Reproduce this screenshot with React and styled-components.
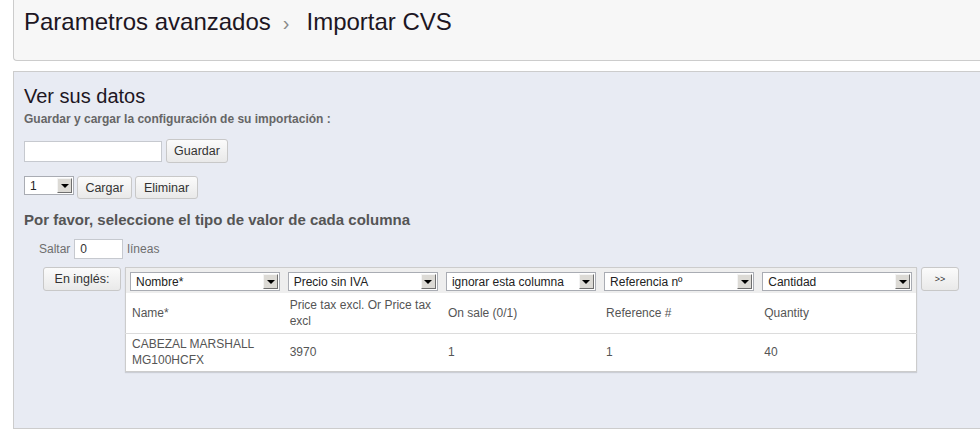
import React from "react";
import styled, { createGlobalStyle } from "styled-components";

const Global = createGlobalStyle`
  html, body { margin: 0; padding: 0; background: #fff; }
  body { font-family: "Liberation Sans", Arial, sans-serif; overflow: hidden; }
  * { box-sizing: border-box; }
`;

const Page = styled.div`
  width: 980px;
  height: 444px;
  padding-left: 13px;
  overflow: hidden;
`;

const Header = styled.header`
  height: 61px;
  margin-right: -20px;
  background: #f7f7f7;
  border: 1px solid #cccccc;
  border-top: none;
  border-right: none;
  border-bottom-left-radius: 4px;
  padding: 8px 0 0 10px;
`;

const Crumbs = styled.h1`
  margin: 0;
  font-size: 24px;
  line-height: 28px;
  font-weight: normal;
  color: #1d1623;
  display: flex;
  align-items: baseline;
`;

const Sep = styled.span`
  color: #8a8a8a;
  font-size: 20px;
  margin: 0 17px 0 12px;
`;

const Panel = styled.section`
  margin-top: 10px;
  margin-right: -20px;
  background: #e8ebf3;
  border: 1px solid #cccccc;
  border-right: none;
  padding: 12px 0 56px 10px;
`;

const Title = styled.h2`
  margin: 0;
  font-size: 20px;
  line-height: 24px;
  font-weight: normal;
  color: #1d1623;
`;

const Sub = styled.p`
  margin: 4px 0 0;
  font-size: 12px;
  line-height: 15px;
  font-weight: bold;
  color: #666666;
`;

const Row = styled.div`
  display: flex;
  align-items: ${(p) => p.$align || "center"};
  gap: ${(p) => p.$gap ?? 4}px;
  margin-top: ${(p) => p.$mt || 0}px;
  padding-left: ${(p) => p.$indent || 0}px;
`;

const TextInput = styled.div`
  width: ${(p) => p.$w}px;
  height: ${(p) => p.$h || 21}px;
  background: #fff;
  border: 1px solid #c6c9cf;
  font-size: 12px;
  color: #333;
  padding-left: 5px;
  display: flex;
  align-items: center;
`;

const Button = styled.button`
  height: ${(p) => p.$h || 24}px;
  width: ${(p) => p.$w}px;
  padding: 0;
  font-family: "Liberation Sans", Arial, sans-serif;
  font-size: ${(p) => p.$fs || 12.5}px;
  color: #333;
  background: linear-gradient(#fbfbfb, #e9e9e9);
  border: 1px solid #c8c8c8;
  border-radius: 3px;
  flex: none;
`;

const SelectBox = styled.div`
  width: ${(p) => p.$w}px;
  height: 19px;
  background: #fff;
  border: 1px solid #a9acb3;
  display: flex;
  align-items: center;
  justify-content: space-between;
  padding: 0 1px 0 5px;
  font-size: 12px;
  color: #222;
  flex: none;
`;

const ArrowBtn = styled.span`
  width: 15px;
  height: 15px;
  background: #dcdad5;
  border: 1px solid;
  border-color: #f4f4f4 #6f6f6f #6f6f6f #f4f4f4;
  display: flex;
  align-items: center;
  justify-content: center;
  &::after {
    content: "";
    width: 0;
    height: 0;
    border-left: 4px solid transparent;
    border-right: 4px solid transparent;
    border-top: 4px solid #000;
  }
`;

const Select = ({ w, children }) => (
  <SelectBox $w={w}>
    <span>{children}</span>
    <ArrowBtn />
  </SelectBox>
);

const Section = styled.h3`
  margin: 12px 0 0;
  font-size: 15px;
  line-height: 18px;
  font-weight: bold;
  color: #555555;
`;

const Label = styled.span`
  font-size: 12px;
  color: #6e6e6e;
`;

const Table = styled.table`
  border-collapse: collapse;
  table-layout: fixed;
  width: 792px;
  background: #fff;
  border: 1px solid #cccccc;
  box-shadow: 0 1px 1px rgba(0, 0, 0, 0.12);
  flex: none;
`;

const SelRow = styled.tr`
  background: #eeeeee;
  td {
    padding: 4px 0 2px 4px;
    height: 25px;
  }
`;

const HeadRow = styled.tr`
  border-bottom: 1px solid #dcdcdc;
  td {
    height: 40px;
  }
`;

const DataRow = styled.tr`
  td {
    height: 38px;
  }
`;

const Cell = styled.td`
  padding: 0 8px 0 6px;
  font-size: 12px;
  line-height: 16px;
  color: #555;
  vertical-align: middle;
`;

const columns = [
  { sel: "Nombre*", head: "Name*", val: "CABEZAL MARSHALL MG100HCFX" },
  { sel: "Precio sin IVA", head: "Price tax excl. Or Price tax excl", val: "3970" },
  { sel: "ignorar esta columna", head: "On sale (0/1)", val: "1" },
  { sel: "Referencia nº", head: "Reference #", val: "1" },
  { sel: "Cantidad", head: "Quantity", val: "40" },
];

export default function App() {
  return (
    <Page>
      <Global />
      <Header>
        <Crumbs>
          <span>Parametros avanzados</span>
          <Sep>›</Sep>
          <span>Importar CVS</span>
        </Crumbs>
      </Header>
      <Panel>
        <Title>Ver sus datos</Title>
        <Sub>Guardar y cargar la configuración de su importación :</Sub>
        <Row $mt={12}>
          <TextInput $w={138} />
          <Button $w={62}>Guardar</Button>
        </Row>
        <Row $mt={13} $align="flex-start" $gap={3}>
          <Select w={50}>1</Select>
          <Button $w={55} $h={23}>Cargar</Button>
          <Button $w={63} $h={23}>Eliminar</Button>
        </Row>
        <Section>Por favor, seleccione el tipo de valor de cada columna</Section>
        <Row $mt={10} $indent={15} $gap={4}>
          <Label>Saltar</Label>
          <TextInput $w={49} $h={20}>0</TextInput>
          <Label>líneas</Label>
        </Row>
        <Row $mt={8} $align="flex-start" $indent={19} $gap={4}>
          <Button $w={78}>En inglés:</Button>
          <Table>
            <colgroup>
              {columns.map((c) => (
                <col key={c.sel} style={{ width: 158 }} />
              ))}
            </colgroup>
            <tbody>
              <SelRow>
                {columns.map((c) => (
                  <td key={c.sel}>
                    <Select w={150}>{c.sel}</Select>
                  </td>
                ))}
              </SelRow>
              <HeadRow>
                {columns.map((c) => (
                  <Cell key={c.sel}>{c.head}</Cell>
                ))}
              </HeadRow>
              <DataRow>
                {columns.map((c) => (
                  <Cell key={c.sel}>{c.val}</Cell>
                ))}
              </DataRow>
            </tbody>
          </Table>
          <Button $w={38} $fs={9}>&gt;&gt;</Button>
        </Row>
      </Panel>
    </Page>
  );
}
